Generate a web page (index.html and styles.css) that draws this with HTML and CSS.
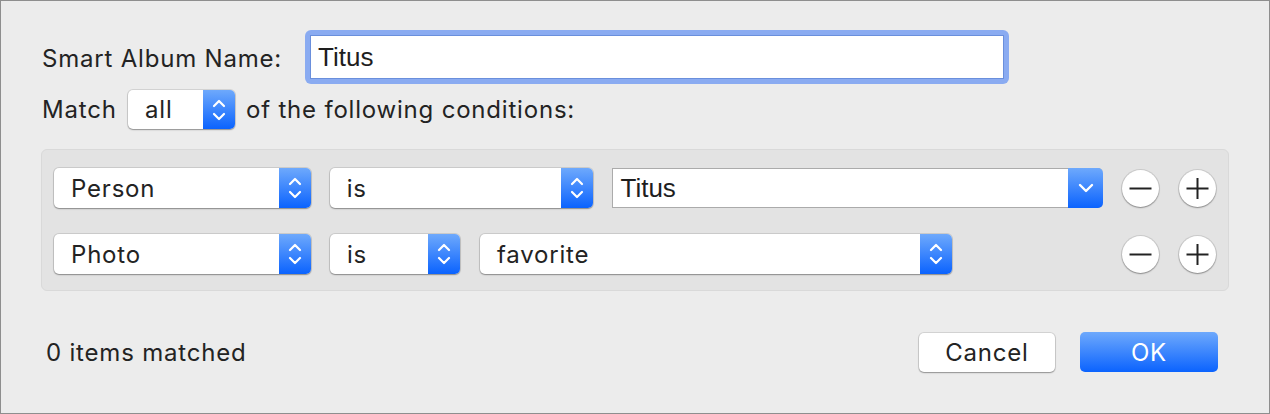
FILE: index.html
```html
<!DOCTYPE html>
<html>
<head>
<meta charset="utf-8">
<link rel="stylesheet" href="styles.css">
</head>
<body>
<div class="window">
  <div class="name-row">
    <label class="name-label">Smart Album Name:</label>
    <div class="focus-ring"><div class="field">Titus</div></div>
  </div>
  <div class="match-row">
    <span class="text">Match</span>
    <div class="popup w-all"><span class="val">all</span><span class="arrows"><svg width="14" height="24" viewBox="0 0 14 24"><path d="M2 8 L7 3 L12 8 M2 16 L7 21 L12 16" fill="none" stroke="#fff" stroke-width="2.2" stroke-linecap="round" stroke-linejoin="round"/></svg></span></div>
    <span class="text">of the following conditions:</span>
  </div>
  <div class="conditions">
    <div class="cond-row">
      <div class="popup w-field"><span class="val">Person</span><span class="arrows"><svg width="14" height="24" viewBox="0 0 14 24"><path d="M2 8 L7 3 L12 8 M2 16 L7 21 L12 16" fill="none" stroke="#fff" stroke-width="2.2" stroke-linecap="round" stroke-linejoin="round"/></svg></span></div>
      <div class="popup w-op1"><span class="val">is</span><span class="arrows"><svg width="14" height="24" viewBox="0 0 14 24"><path d="M2 8 L7 3 L12 8 M2 16 L7 21 L12 16" fill="none" stroke="#fff" stroke-width="2.2" stroke-linecap="round" stroke-linejoin="round"/></svg></span></div>
      <div class="combo"><span class="combo-val">Titus</span><span class="combo-btn"><svg width="16" height="10" viewBox="0 0 16 10"><path d="M2 2 L8 8 L14 2" fill="none" stroke="#fff" stroke-width="2.4" stroke-linecap="round" stroke-linejoin="round"/></svg></span></div>
      <div class="circle-btns">
        <div class="circle"><svg width="37" height="37" viewBox="0 0 37 37"><path d="M7.5 18.5 H29.5" stroke="#222" stroke-width="2"/></svg></div>
        <div class="circle"><svg width="37" height="37" viewBox="0 0 37 37"><path d="M7.5 18.5 H29.5 M18.5 8 V29" stroke="#222" stroke-width="2"/></svg></div>
      </div>
    </div>
    <div class="cond-row">
      <div class="popup w-field"><span class="val">Photo</span><span class="arrows"><svg width="14" height="24" viewBox="0 0 14 24"><path d="M2 8 L7 3 L12 8 M2 16 L7 21 L12 16" fill="none" stroke="#fff" stroke-width="2.2" stroke-linecap="round" stroke-linejoin="round"/></svg></span></div>
      <div class="popup w-op2"><span class="val">is</span><span class="arrows"><svg width="14" height="24" viewBox="0 0 14 24"><path d="M2 8 L7 3 L12 8 M2 16 L7 21 L12 16" fill="none" stroke="#fff" stroke-width="2.2" stroke-linecap="round" stroke-linejoin="round"/></svg></span></div>
      <div class="popup w-fav"><span class="val">favorite</span><span class="arrows"><svg width="14" height="24" viewBox="0 0 14 24"><path d="M2 8 L7 3 L12 8 M2 16 L7 21 L12 16" fill="none" stroke="#fff" stroke-width="2.2" stroke-linecap="round" stroke-linejoin="round"/></svg></span></div>
      <div class="circle-btns">
        <div class="circle"><svg width="37" height="37" viewBox="0 0 37 37"><path d="M7.5 18.5 H29.5" stroke="#222" stroke-width="2"/></svg></div>
        <div class="circle"><svg width="37" height="37" viewBox="0 0 37 37"><path d="M7.5 18.5 H29.5 M18.5 8 V29" stroke="#222" stroke-width="2"/></svg></div>
      </div>
    </div>
  </div>
  <div class="bottom-row">
    <span class="status">0 items matched</span>
    <div class="buttons">
      <div class="btn cancel">Cancel</div>
      <div class="btn ok">OK</div>
    </div>
  </div>
</div>
</body>
</html>
```

FILE: styles.css
```css
* { box-sizing: border-box; }
html, body { margin: 0; padding: 0; background: #ececec; }
body {
  font-family: Inter, "Noto Sans", sans-serif;
  font-size: 24px;
  letter-spacing: 0.8px;
  color: #232323;
}
.window {
  width: 1270px;
  height: 414px;
  border: 1px solid #8e8e8e;
  background: #ececec;
  padding: 29px 40px 0 40px;
}
.name-row {
  display: flex;
  align-items: center;
  height: 54px;
}
.name-label {
  width: 264px;
  padding-left: 1px;
  padding-top: 2px;
}
.focus-ring {
  width: 704px;
  height: 54px;
  padding: 5px;
  border-radius: 6px;
  background: #8aabf1;
}
.field {
  height: 100%;
  background: #fff;
  border: 1px solid #6a8fdc;
  padding-left: 7px;
  display: flex;
  align-items: center;
  font-family: "Liberation Sans", Arial, sans-serif;
  font-size: 26px;
  letter-spacing: 0;
  color: #1e1e1e;
}
.match-row {
  display: flex;
  align-items: center;
  margin-top: 6px;
  height: 39px;
  padding-left: 1px;
}
.match-row .text:first-child { width: 86px; }
.match-row .popup { margin-right: 11px; }
.popup {
  display: flex;
  height: 40px;
  background: #fff;
  border-radius: 5px;
  box-shadow: 0 0 0 1px rgba(0,0,0,0.10), 0 1px 1.5px rgba(0,0,0,0.32);
}
.match-row .popup { height: 39px; }
.popup .val {
  flex: 1;
  display: flex;
  align-items: center;
  padding-left: 17px;
}
.arrows {
  width: 32px;
  display: flex;
  align-items: center;
  justify-content: center;
  border-radius: 0 5px 5px 0;
  background: linear-gradient(#6ea9fc, #0b63fe);
}
.w-all { width: 107px; }
.w-field { width: 257px; }
.w-op1 { width: 264px; }
.w-op2 { width: 130px; }
.w-fav { width: 472px; }
.conditions {
  margin-top: 20px;
  height: 142px;
  background: #e3e3e3;
  border: 1px solid #d9d9d9;
  border-radius: 6px;
  padding: 18px 12px 0 12px;
  display: flex;
  flex-direction: column;
  gap: 26px;
}
.cond-row {
  display: flex;
  align-items: center;
  gap: 19px;
  height: 40px;
}
.cond-row .w-fav { margin-left: 1px; }
.combo {
  width: 491px;
  height: 40px;
  display: flex;
  background: #fff;
  border: 1px solid #ababab;
  border-right: none;
  border-radius: 0 5px 5px 0;
}
.combo-val {
  flex: 1;
  display: flex;
  align-items: center;
  padding-left: 7px;
  font-family: "Liberation Sans", Arial, sans-serif;
  font-size: 26px;
  letter-spacing: 0;
  color: #1e1e1e;
}
.combo-btn {
  width: 35px;
  margin: -1px 0;
  display: flex;
  align-items: center;
  justify-content: center;
  border-radius: 0 5px 5px 0;
  background: linear-gradient(#6ea9fc, #0b63fe);
}
.circle-btns {
  margin-left: auto;
  display: flex;
  gap: 20px;
}
.circle {
  width: 37px;
  height: 37px;
  border-radius: 50%;
  background: #fff;
  box-shadow: 0 0 0 1px rgba(0,0,0,0.10), 0 1px 1.5px rgba(0,0,0,0.32);
}
.circle svg { display: block; }
.bottom-row {
  margin-top: 41px;
  display: flex;
  align-items: center;
  height: 40px;
  padding: 0 11px 0 5px;
}
.buttons {
  margin-left: auto;
  display: flex;
  align-items: center;
  gap: 25px;
}
.btn {
  height: 39px;
  display: flex;
  align-items: center;
  justify-content: center;
  border-radius: 5px;
}
.cancel {
  width: 136px;
  background: #fff;
  box-shadow: 0 0 0 1px rgba(0,0,0,0.10), 0 1px 1.5px rgba(0,0,0,0.32);
}
.ok {
  width: 138px;
  height: 40px;
  color: #fff;
  background: linear-gradient(#6ea9fc, #0b63fe);
}
```
